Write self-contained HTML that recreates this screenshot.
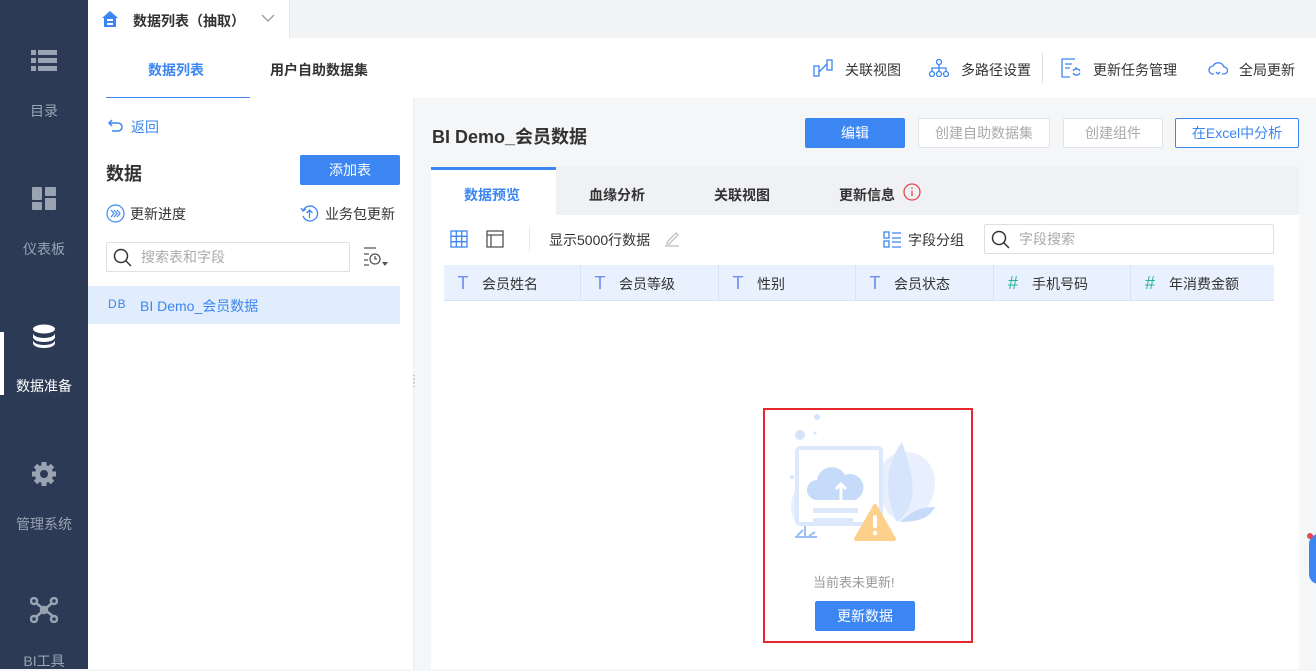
<!DOCTYPE html>
<html><head><meta charset="utf-8"><style>
*{margin:0;padding:0;box-sizing:border-box}
body{width:1316px;height:669px;overflow:hidden;position:relative;background:#f5f6f8;font-family:"Liberation Sans","Noto Sans CJK SC",sans-serif;font-size:14px;color:#333}
.abs{position:absolute}
.sb{left:0;top:0;width:88px;height:669px;background:#2c3a55}
.si{position:absolute;left:0;width:88px;text-align:center;color:#9aa3b2;font-size:14px}
.top{left:88px;top:0;width:1228px;height:38px;background:#f3f4f6}
.hdr{left:88px;top:38px;width:1228px;height:60px;background:#fff}
.left{left:88px;top:98px;width:325px;height:571px;background:#fff}
.btn{position:absolute;border-radius:2px;text-align:center;font-size:14px}
.th{position:absolute;top:265px;height:36px;line-height:36px;background:#e8f1fd;border-right:1px solid #d4e3f7;font-size:14px;color:#333}
.th i{font-style:normal;display:inline-block;width:38px;text-align:center;font-size:18px;color:#6e8ff0}
b{font-weight:600}
</style></head><body>
<div class="abs sb"></div>
<svg class="abs" style="left:31px;top:50px" width="26" height="22"><g fill="#9aa3b2"><rect x="0" y="0" width="5" height="5"/><rect x="7" y="0" width="19" height="5"/><rect x="0" y="8" width="5" height="5"/><rect x="7" y="8" width="19" height="5"/><rect x="0" y="16" width="5" height="5"/><rect x="7" y="16" width="19" height="5"/></g></svg>
<div class="si" style="top:101px">目录</div>
<svg class="abs" style="left:32px;top:187px" width="24" height="23"><g fill="#9aa3b2"><rect x="0" y="0" width="10" height="13" rx="1"/><rect x="13" y="0" width="11" height="9" rx="1"/><rect x="0" y="15" width="10" height="8" rx="1"/><rect x="13" y="11" width="11" height="12" rx="1"/></g></svg>
<div class="si" style="top:239px">仪表板</div>
<div class="abs" style="left:0;top:332px;width:4px;height:63px;background:#fff"></div>
<svg class="abs" style="left:32px;top:324px" width="24" height="24"><g fill="#fff"><ellipse cx="12" cy="5" rx="11" ry="4.5"/><path d="M1 9c0 3 5 5 11 5s11-2 11-5v4c0 3-5 5-11 5S1 16 1 13z"/><path d="M1 16c0 3 5 5 11 5s11-2 11-5v3c0 3-5 5-11 5S1 22 1 19z"/></g></svg>
<div class="si" style="top:376px;color:#fff">数据准备</div>
<svg class="abs" style="left:31px;top:461px" width="26" height="26" viewBox="0 0 26 26"><g fill="#9aa3b2"><circle cx="13" cy="13" r="9"/><g stroke="#9aa3b2" stroke-width="5"><path d="M13 1v24M1 13h24M4.5 4.5l17 17M21.5 4.5l-17 17"/></g></g><circle cx="13" cy="13" r="4" fill="#2c3a55"/></svg>
<div class="si" style="top:514px">管理系统</div>
<svg class="abs" style="left:30px;top:597px" width="28" height="26" viewBox="0 0 28 26" fill="none" stroke="#9aa3b2" stroke-width="2.5"><circle cx="4" cy="4" r="3"/><circle cx="24" cy="4" r="3"/><circle cx="4" cy="22" r="3"/><circle cx="24" cy="22" r="3"/><circle cx="14" cy="13" r="3"/><path d="M6 6l18 14M22 6L6 20"/></svg>
<div class="si" style="top:651px">BI工具</div>

<div class="abs top"></div>
<div class="abs" style="left:88px;top:0;width:202px;height:38px;background:#fff;border-right:1px solid #e3e5e9"></div>
<svg class="abs" style="left:102px;top:11px" width="16" height="16" viewBox="0 0 16 16"><path d="M8 0L0 7h2v9h12V7h2z" fill="#3b86f2"/><rect x="5" y="8" width="6" height="2" fill="#fff"/><rect x="5" y="12" width="6" height="2" fill="#fff"/></svg>
<div class="abs" style="left:133px;top:11px;font-size:14px;color:#333"><b>数据列表（抽取）</b></div>
<svg class="abs" style="left:261px;top:14px" width="14" height="9"><path d="M1 1l6 6 6-6" fill="none" stroke="#999" stroke-width="1.3"/></svg>

<div class="abs hdr"></div>
<div class="abs" style="left:148px;top:60px;color:#3b86f2"><b>数据列表</b></div>
<div class="abs" style="left:270px;top:60px;color:#333"><b>用户自助数据集</b></div>
<div class="abs" style="left:106px;top:98px;width:288px;height:1px;background:#e6e8eb"></div>
<div class="abs" style="left:106px;top:97px;width:144px;height:2px;background:#3b86f2"></div>

<svg class="abs" style="left:813px;top:59px" width="20" height="18" fill="none" stroke="#3b86f2" stroke-width="1.3"><rect x="1" y="7" width="5" height="10"/><rect x="14" y="1" width="5" height="10"/><path d="M6 13l8-8"/></svg>
<div class="abs" style="left:845px;top:60px">关联视图</div>
<svg class="abs" style="left:929px;top:59px" width="20" height="18" fill="none" stroke="#3b86f2" stroke-width="1.3"><circle cx="10" cy="3" r="2.5"/><circle cx="3" cy="15" r="2.5"/><circle cx="10" cy="15" r="2.5"/><circle cx="17" cy="15" r="2.5"/><path d="M10 6v6M3 12V9h14v3"/></svg>
<div class="abs" style="left:961px;top:60px">多路径设置</div>
<div class="abs" style="left:1042px;top:53px;width:1px;height:30px;background:#ddd"></div>
<svg class="abs" style="left:1061px;top:58px" width="20" height="20" fill="none" stroke="#3b86f2" stroke-width="1.3"><path d="M14 1H1v18h8M4 6h7M4 10h5"/><path d="M15 9v2M12 15a4 4 0 0 0 7 0M19 13a4 4 0 0 0-7 0"/></svg>
<div class="abs" style="left:1093px;top:60px">更新任务管理</div>
<svg class="abs" style="left:1208px;top:60px" width="20" height="16" fill="none" stroke="#3b86f2" stroke-width="1.3"><path d="M6 14H5a4 4 0 0 1 0-8 6 6 0 0 1 11 1 3.5 3.5 0 0 1 0 7h-2"/><path d="M8 12l2 2 2-2"/></svg>
<div class="abs" style="left:1239px;top:60px">全局更新</div>

<div class="abs left"></div>
<div class="abs" style="left:413px;top:98px;width:1px;height:571px;background:#eceef1"></div>
<div class="abs" style="left:409px;top:378px;color:#999;font-size:10px;line-height:4px">⋮<br>⋮</div>
<svg class="abs" style="left:108px;top:119px" width="16" height="13" fill="none" stroke="#3b86f2" stroke-width="1.5"><path d="M4 1L1 4l3 3M1 4h9a4 4 0 0 1 0 8H4"/></svg>
<div class="abs" style="left:131px;top:117px;color:#3b86f2">返回</div>
<div class="abs" style="left:106px;top:160px;font-size:18px"><b>数据</b></div>
<div class="btn" style="left:300px;top:155px;width:100px;height:30px;line-height:30px;background:#3b86f2;color:#fff">添加表</div>
<svg class="abs" style="left:106px;top:204px" width="19" height="19" fill="none" stroke="#3b86f2" stroke-width="1.2"><circle cx="9.5" cy="9.5" r="8.5"/><path d="M5 6l3 3.5-3 3.5M8 6l3 3.5-3 3.5M11 6l3 3.5-3 3.5"/></svg>
<div class="abs" style="left:130px;top:204px">更新进度</div>
<svg class="abs" style="left:300px;top:204px" width="19" height="19" fill="none" stroke="#3b86f2" stroke-width="1.3"><path d="M3 7a7.5 7.5 0 1 1 0 5"/><path d="M9.5 14V6M6.5 9l3-3 3 3"/><path d="M1 4l2 3 3-2"/></svg>
<div class="abs" style="left:325px;top:204px">业务包更新</div>
<div class="abs" style="left:106px;top:242px;width:244px;height:30px;border:1px solid #dcdfe6;border-radius:2px;background:#fff"></div>
<svg class="abs" style="left:113px;top:248px" width="19" height="19" fill="none" stroke="#333" stroke-width="1.5"><circle cx="8" cy="8" r="6.5"/><path d="M13 13l5 5"/></svg>
<div class="abs" style="left:141px;top:247px;color:#aaa">搜索表和字段</div>
<svg class="abs" style="left:363px;top:246px" width="26" height="22" fill="none" stroke="#555" stroke-width="1.3"><path d="M1 2h12M1 8h5M1 14h4M1 19h5"/><circle cx="12" cy="13" r="5"/><path d="M12 10v3h2"/><path d="M19 16h6l-3 4z" fill="#555" stroke="none"/></svg>
<div class="abs" style="left:88px;top:286px;width:312px;height:38px;background:#e1ecfc"></div>
<div class="abs" style="left:108px;top:297px;color:#3b86f2;font-size:12px;letter-spacing:1px">DB</div>
<div class="abs" style="left:140px;top:296px;color:#3b86f2">BI Demo_会员数据</div>

<div class="abs" style="left:432px;top:123px;font-size:18px;color:#333"><b>BI Demo_会员数据</b></div>
<div class="btn" style="left:805px;top:118px;width:100px;height:30px;line-height:30px;background:#3b86f2;color:#fff">编辑</div>
<div class="btn" style="left:918px;top:118px;width:132px;height:30px;line-height:28px;border:1px solid #e0e3e8;background:#fff;color:#aaa">创建自助数据集</div>
<div class="btn" style="left:1063px;top:118px;width:100px;height:30px;line-height:28px;border:1px solid #e0e3e8;background:#fff;color:#aaa">创建组件</div>
<div class="btn" style="left:1175px;top:118px;width:124px;height:30px;line-height:28px;border:1px solid #3b86f2;background:#fff;color:#3b86f2">在Excel中分析</div>

<div class="abs" style="left:431px;top:167px;width:868px;height:48px;background:#eff1f5"></div>
<div class="abs" style="left:431px;top:167px;width:125px;height:48px;background:#fff;border-top:3px solid #3b86f2"></div>
<div class="abs" style="left:464px;top:185px;color:#3b86f2"><b>数据预览</b></div>
<div class="abs" style="left:589px;top:185px"><b>血缘分析</b></div>
<div class="abs" style="left:714px;top:185px"><b>关联视图</b></div>
<div class="abs" style="left:839px;top:185px"><b>更新信息</b></div>
<svg class="abs" style="left:903px;top:183px" width="18" height="18" fill="none" stroke="#e5484d" stroke-width="1.3"><circle cx="9" cy="9" r="8"/><path d="M9 7.5v5.5M9 4.5v1.5"/></svg>

<div class="abs" style="left:431px;top:215px;width:868px;height:454px;background:#fff"></div>
<svg class="abs" style="left:450px;top:230px" width="18" height="18" fill="none" stroke="#3b86f2" stroke-width="1.3"><rect x="1" y="1" width="16" height="16"/><path d="M6.3 1v16M11.7 1v16M1 6.3h16M1 11.7h16"/></svg>
<svg class="abs" style="left:486px;top:230px" width="18" height="18" fill="none" stroke="#555" stroke-width="1.3"><rect x="1" y="1" width="16" height="16"/><path d="M1 5h16M5 5v12"/></svg>
<div class="abs" style="left:529px;top:227px;width:1px;height:24px;background:#e6e6e6"></div>
<div class="abs" style="left:549px;top:230px">显示5000行数据</div>
<svg class="abs" style="left:664px;top:230px" width="16" height="17" fill="none" stroke="#bbb" stroke-width="1.2"><path d="M3 12l9-9 2 2-9 9H3zM1 16h14"/></svg>
<svg class="abs" style="left:883px;top:231px" width="19" height="17" fill="none" stroke="#3b86f2" stroke-width="1.3"><rect x="1" y="1" width="5" height="6"/><rect x="1" y="10" width="5" height="6"/><path d="M9 2h9M9 7h9M9 11h9M9 16h9"/></svg>
<div class="abs" style="left:908px;top:230px">字段分组</div>
<div class="abs" style="left:984px;top:224px;width:290px;height:30px;border:1px solid #dcdfe6;border-radius:2px"></div>
<svg class="abs" style="left:991px;top:230px" width="19" height="19" fill="none" stroke="#333" stroke-width="1.5"><circle cx="8" cy="8" r="6.5"/><path d="M13 13l5 5"/></svg>
<div class="abs" style="left:1019px;top:229px;color:#aaa">字段搜索</div>

<div class="th" style="left:444px;width:137px"><i>T</i>会员姓名</div>
<div class="th" style="left:581px;width:138px"><i>T</i>会员等级</div>
<div class="th" style="left:719px;width:137px"><i>T</i>性别</div>
<div class="th" style="left:856px;width:138px"><i>T</i>会员状态</div>
<div class="th" style="left:994px;width:137px"><i style="color:#2bb39c">#</i>手机号码</div>
<div class="th" style="left:1131px;width:143px;border-right:none"><i style="color:#2bb39c">#</i>年消费金额</div>
<div class="abs" style="left:444px;top:300px;width:830px;height:1px;background:#d4e3f7"></div>

<div class="abs" style="left:763px;top:408px;width:210px;height:235px;border:2px solid #e8262d"></div>
<svg class="abs" style="left:785px;top:412px" width="160" height="130" viewBox="0 0 160 130">
<circle cx="32" cy="5" r="3" fill="#d5e4fb"/><circle cx="15" cy="23" r="5" fill="#d5e4fb"/><circle cx="30" cy="21" r="1.5" fill="#d5e4fb"/><circle cx="7" cy="65" r="2" fill="#d5e4fb"/>
<path d="M10 110c-10-20 0-40 20-45h20v45z" fill="#e8f0fd"/>
<path d="M120 110c40-10 40-70 0-70s-30 70 0 70z" fill="#e8f0fd"/>
<path d="M112 110c-15-30-10-60 5-80 10 30 20 60-5 80z" fill="#d6e5fb"/>
<path d="M115 110c10-10 20-15 35-15-5 10-15 15-35 15z" fill="#c6dbfa"/>
<rect x="12" y="36" width="84" height="76" rx="3" fill="#fff" stroke="#dce8fb" stroke-width="4"/>
<path d="M32 88a10 10 0 0 1 0-20 15 15 0 0 1 28-5 12 12 0 0 1 10 25z" fill="#c6dbfa"/>
<path d="M56 88V72M51 77l5-5 5 5" stroke="#fff" stroke-width="3" fill="none"/>
<rect x="28" y="96" width="45" height="5" fill="#dce8fb"/><rect x="28" y="106" width="40" height="5" fill="#dce8fb"/>
<path d="M90 94l19 33H71z" fill="#fdd18c" stroke="#fdd18c" stroke-width="4" stroke-linejoin="round"/>
<rect x="88" y="103" width="4" height="13" rx="2" fill="#fff"/><circle cx="90" cy="121" r="2.3" fill="#fff"/>
<path d="M12 124l6-6M20 124v-10M24 124l6-4M10 125h22" stroke="#9dbdf5" stroke-width="2" fill="none"/>
</svg>
<div class="abs" style="left:813px;top:572px;color:#999;font-size:13px">当前表未更新!</div>
<div class="btn" style="left:815px;top:601px;width:100px;height:30px;line-height:30px;background:#3b86f2;color:#fff">更新数据</div>
<div class="abs" style="left:1309px;top:534px;width:20px;height:50px;border-radius:10px;background:#3b86f2"></div>
<div class="abs" style="left:1307px;top:533px;width:6px;height:6px;border-radius:3px;background:#e5484d"></div>
</body></html>
